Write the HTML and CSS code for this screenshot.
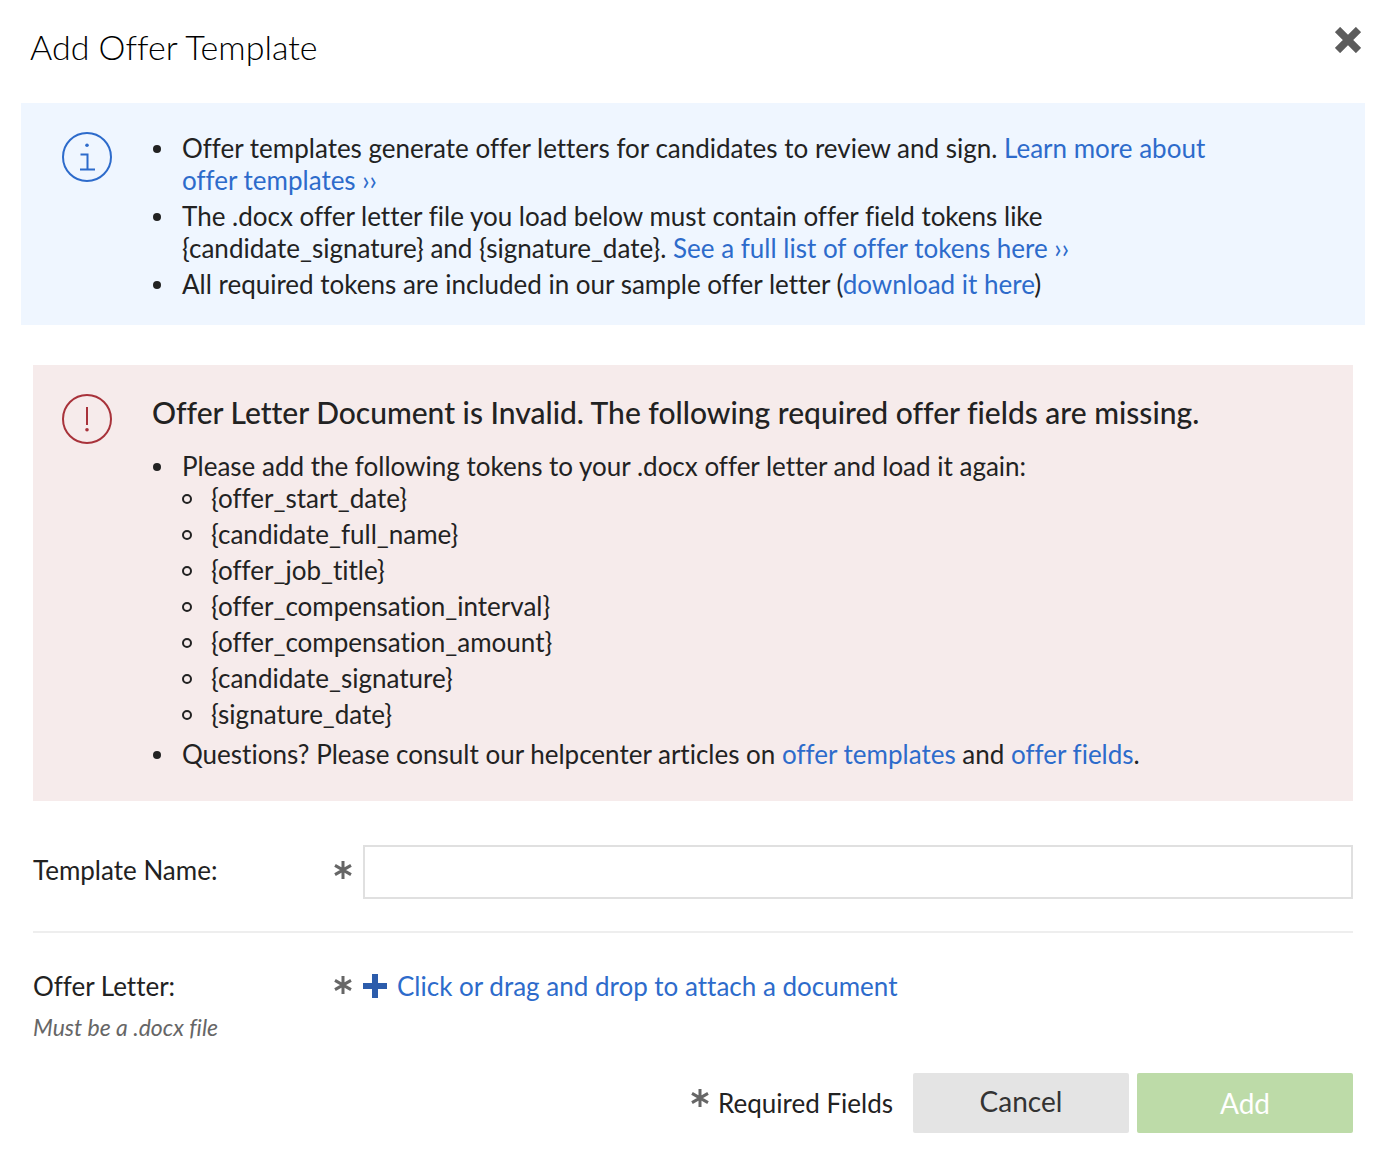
FILE: index.html
```html
<!DOCTYPE html>
<html lang="en">
<head>
    <meta charset="UTF-8">
    <meta name="viewport" content="width=device-width, initial-scale=1.0">
    <title>Add Offer Template</title>
    <link rel="stylesheet" href="styles.css">
</head>
<body>
    <svg class="sprite" aria-hidden="true">
        <symbol id="asterisk" viewBox="0 0 18 18">
            <path d="M9 0v18M1 4.4l16 9.2M1 13.6l16-9.2" fill="none" stroke="#666" stroke-width="3"/>
        </symbol>
    </svg>
    <div class="dialog" role="dialog" aria-labelledby="dialogTitle">
        <header class="dialog-header">
            <h1 id="dialogTitle">Add Offer Template</h1>
            <button type="button" class="close" aria-label="Close">
                <svg width="26" height="26" viewBox="0 0 26 26"><path d="M2.5 2.5l21 21M23.5 2.5l-21 21" stroke="#5c5c5c" stroke-width="7.4"/></svg>
            </button>
        </header>

        <section class="notice info">
            <svg class="notice-icon" viewBox="0 0 50 50">
                <circle cx="25" cy="25" r="24"/>
                <path d="M18.5 22.5h7v15M18 37.5h15"/>
                <circle class="dot" cx="25" cy="13.3" r="1.8"/>
            </svg>
            <ul class="list">
                <li>Offer templates generate offer letters for candidates to review and sign. <a href="#">Learn more about offer templates ››</a></li>
                <li>The .docx offer letter file you load below must contain offer field tokens like {candidate_signature} and {signature_date}. <a href="#">See a full list of offer tokens here ››</a></li>
                <li>All required tokens are included in our sample offer letter (<a href="#">download it here</a>)</li>
            </ul>
        </section>

        <form class="form">
            <section class="notice error">
                <svg class="notice-icon" viewBox="0 0 50 50">
                    <circle cx="25" cy="25" r="24"/>
                    <path d="M25 13v18"/>
                    <circle class="dot" cx="25" cy="35.7" r="1.8"/>
                </svg>
                <div class="notice-body">
                    <h2>Offer Letter Document is Invalid. The following required offer fields are missing.</h2>
                    <ul class="list">
                        <li>Please add the following tokens to your .docx offer letter and load it again:
                            <ul class="list tokens">
                                <li>{offer_start_date}</li>
                                <li>{candidate_full_name}</li>
                                <li>{offer_job_title}</li>
                                <li>{offer_compensation_interval}</li>
                                <li>{offer_compensation_amount}</li>
                                <li>{candidate_signature}</li>
                                <li>{signature_date}</li>
                            </ul>
                        </li>
                        <li>Questions? Please consult our helpcenter articles on <a href="#">offer templates</a> and <a href="#">offer fields</a>.</li>
                    </ul>
                </div>
            </section>

            <div class="row name-row">
                <label class="row-label" for="templateName">Template Name:</label>
                <svg class="required"><use href="#asterisk"/></svg>
                <input type="text" id="templateName" class="text-input" required>
            </div>

            <div class="row">
                <div class="row-label">
                    <span id="letterLabel">Offer Letter:</span>
                    <p class="hint">Must be a .docx file</p>
                </div>
                <svg class="required"><use href="#asterisk"/></svg>
                <button type="button" class="attach" aria-describedby="letterLabel">
                    <svg width="24" height="24" viewBox="0 0 24 24"><path d="M12 0v24M0 12h24" stroke="#2c5cab" stroke-width="6"/></svg>
                    Click or drag and drop to attach a document
                </button>
            </div>

            <footer class="actions">
                <svg class="required"><use href="#asterisk"/></svg>
                <span class="required-text">Required Fields</span>
                <button type="button" class="button">Cancel</button>
                <button type="submit" class="button primary" disabled>Add</button>
            </footer>
        </form>
    </div>
</body>
</html>
```
FILE: styles.css
```css
*, *::before {
    box-sizing: border-box;
}
body {
    margin: 0;
    background-color: #fff;
    color: #222;
    font-family: Lato, "Open Sans", sans-serif;
    font-size: 26px;
    font-variant-ligatures: none;
    line-height: 32px;
}
h1, h2, p, ul {
    margin: 0;
    padding: 0;
}
a {
    color: #2d6bcb;
    text-decoration: none;
}
button {
    font: inherit;
    border: 0;
    cursor: pointer;
}
.sprite {
    display: none;
}
.dialog {
    padding: 27px 20px 25px 21px;
}
.dialog-header {
    display: flex;
    justify-content: space-between;
    align-items: flex-start;
    padding: 0 4px 36px 9px;
}
.dialog-header h1 {
    color: #000;
    font-size: 34px;
    font-weight: 300;
    line-height: 40px;
}
.close {
    display: flex;
    padding: 0;
    background: none;
}
.notice {
    display: flex;
    align-items: flex-start;
}
.notice-icon {
    flex: none;
    width: 50px;
    height: 50px;
    margin-right: 40px;
    fill: none;
    stroke: currentColor;
    stroke-width: 2;
}
.notice-icon .dot {
    fill: currentColor;
    stroke: none;
}
.info {
    padding: 29px 120px 25px 41px;
    background-color: #eff6ff;
}
.error {
    padding: 29px 60px 31px 29px;
    background-color: #f6ebeb;
}
.info .notice-icon {
    color: #2d6bcb;
}
.error .notice-icon {
    color: #a8323a;
}
.error h2 {
    margin-bottom: 20px;
    font-size: 30px;
    font-weight: 500;
    line-height: 36px;
}
.list {
    padding-left: 30px;
    list-style: none;
}
.list li + li {
    margin-top: 4px;
}
.list li::before {
    content: "";
    display: inline-block;
    width: 8px;
    height: 8px;
    margin: 0 21px 5px -29px;
    border-radius: 50%;
    background-color: #222;
}
.tokens {
    padding-bottom: 4px;
}
.list .tokens li::before {
    width: 10px;
    height: 10px;
    margin: 0 19px 4px -30px;
    border: 2px solid #222;
    background: none;
}
.form {
    padding: 40px 12px 0;
}
.row {
    display: flex;
    align-items: flex-start;
    padding-top: 37px;
}
.name-row {
    align-items: center;
    padding: 44px 0 32px;
    border-bottom: 2px solid #eee;
}
.row-label {
    width: 301px;
}
.name-row .row-label {
    padding-bottom: 4px;
}
.hint {
    margin-top: 9px;
    color: #666;
    font-size: 23px;
    font-style: italic;
}
.required {
    flex: none;
    width: 18px;
    height: 18px;
    margin: 6px 11px 0 0;
}
.name-row .required {
    margin: 0 11px 4px 0;
}
.text-input {
    flex: 1;
    height: 54px;
    padding: 0 12px;
    border: 2px solid #e0e0e0;
    font: inherit;
}
.attach {
    display: flex;
    align-items: center;
    gap: 10px;
    padding: 0;
    background: none;
    color: #2d6bcb;
}
.actions {
    display: flex;
    justify-content: flex-end;
    align-items: center;
    padding-top: 30px;
}
.actions .required {
    margin: 0 9px 10px 0;
}
.required-text {
    margin-right: 20px;
}
.button {
    width: 216px;
    height: 60px;
    padding: 0 0 4px;
    border-radius: 2px;
    background-color: #e4e4e4;
    color: #333;
    font-size: 28px;
}
.button.primary {
    margin-left: 8px;
    padding: 0;
    background-color: #bddba8;
    color: #fff;
}
```
